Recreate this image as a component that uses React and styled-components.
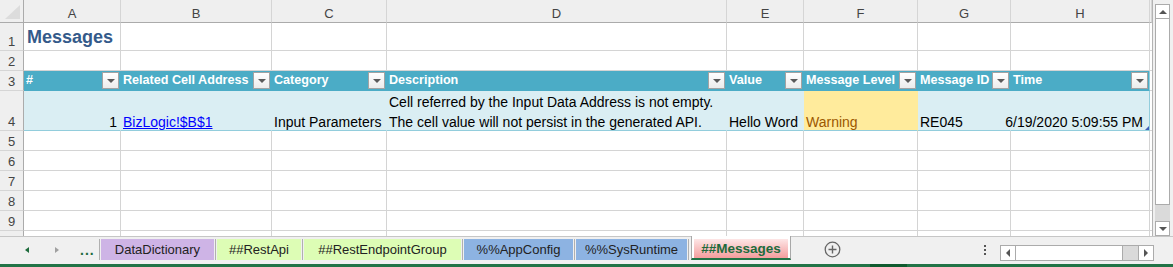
import React from 'react';
import styled, { createGlobalStyle } from 'styled-components';

const GlobalStyle = createGlobalStyle`
  html, body { margin: 0; padding: 0; background: #fff; }
  body { font-family: "Liberation Sans", Arial, sans-serif; }
  * { box-sizing: border-box; }
`;

const Window = styled.div`
  width: 1173px;
  height: 267px;
  display: flex;
  flex-direction: column;
  overflow: hidden;
  background: #f0f0f0;
`;

const SheetArea = styled.div`
  display: flex;
  height: 236px;
  flex: none;
`;

const Grid = styled.div`
  width: 1153px;
  height: 236px;
  overflow: hidden;
  display: grid;
  grid-template-columns: 24px 97px 151px 115px 340px 77px 114px 93px 139px 2px;
  grid-template-rows: 23px 28px 20px 20px 40px repeat(6, 20px);
  align-content: start;
  border-right: 1px solid #b3b3b3;
  background: #fff;
`;

const HeadBase = styled.div`
  display: flex;
  align-items: flex-end;
  justify-content: center;
  background: #efefef;
  color: #444;
  font-size: 13px;
  line-height: 17px;
`;

const Corner = styled(HeadBase)`
  justify-content: flex-end;
  padding: 0 3px 3px 0;
  border-right: 1px solid #ababab;
  border-bottom: 1px solid #ababab;
`;

const CornerTriangle = styled.span`
  width: 15px;
  height: 14px;
  background: #dcdcdc;
  clip-path: polygon(100% 0, 100% 100%, 0 100%);
`;

const ColHead = styled(HeadBase)`
  border-right: 1px solid #d5d5d5;
  border-bottom: 1px solid #ababab;
`;

const RowHead = styled(HeadBase)`
  border-right: 1px solid #ababab;
  border-bottom: 1px solid #d5d5d5;
`;

const Cell = styled.div`
  display: flex;
  align-items: flex-end;
  justify-content: ${(p) => (p.$align === 'right' ? 'flex-end' : 'flex-start')};
  padding: 0 ${(p) => p.$pr ?? 2}px 0 2px;
  background: #fff;
  border-right: 1px solid #d4d4d4;
  border-bottom: 1px solid #d4d4d4;
  font-size: 14px;
  line-height: 16px;
  color: #000;
  white-space: nowrap;
`;

const TitleCell = styled(Cell)`
  padding-left: 3px;
  font-size: 18px;
  font-weight: bold;
  line-height: 26px;
  color: #345a8a;
`;

const TableHeadCell = styled(Cell)`
  justify-content: space-between;
  padding: 0 1px 0 2px;
  background: #4bacc6;
  border-right-color: ${(p) => (p.$last ? '#92cddc' : '#4bacc6')};
  border-bottom-color: #4bacc6;
  color: #fff;
  font-size: 12.6px;
  font-weight: bold;
`;

const HeadLabel = styled.span`
  padding-bottom: 2px;
`;

const FilterBtn = styled.span`
  flex: none;
  width: 17px;
  height: 17px;
  margin-bottom: 1px;
  border: 1px solid #a3a3a3;
  background: linear-gradient(#ffffff, #ececec);
  display: flex;
  align-items: center;
  justify-content: center;
  &::after {
    content: '';
    margin-top: 1px;
    border-left: 4px solid transparent;
    border-right: 4px solid transparent;
    border-top: 4px solid #5a5a5a;
  }
`;

const TableCell = styled(Cell)`
  position: relative;
  background: ${(p) => p.$bg || '#daeef3'};
  border-right-color: ${(p) => (p.$last ? '#92cddc' : p.$bg || '#daeef3')};
  border-bottom-color: #92cddc;
  color: ${(p) => p.$color || '#000'};
`;

const Lines = styled.div`
  display: flex;
  flex-direction: column;
  gap: 4px;
`;

const Link = styled.span`
  color: #0000ff;
  text-decoration: underline;
`;

const ResizeHandle = styled.span`
  position: absolute;
  right: 0;
  bottom: 0;
  width: 4px;
  height: 4px;
  background: #3f5fb8;
  clip-path: polygon(100% 0, 100% 100%, 0 100%);
`;

const VScroll = styled.div`
  width: 20px;
  height: 236px;
  display: flex;
  flex-direction: column;
  padding: 4px 3px 0 2px;
  background: #f0f0f0;
`;

const ScrollBtn = styled.div`
  flex: none;
  width: 15px;
  height: 15px;
  border: 1px solid #ababab;
  background: #fff;
  display: flex;
  align-items: center;
  justify-content: center;
  &::after {
    content: '';
    ${(p) =>
      p.$dir === 'up'
        ? 'border-left:4px solid transparent;border-right:4px solid transparent;border-bottom:4px solid #555;'
        : p.$dir === 'down'
        ? 'border-left:4px solid transparent;border-right:4px solid transparent;border-top:4px solid #555;'
        : p.$dir === 'left'
        ? 'border-top:4px solid transparent;border-bottom:4px solid transparent;border-right:4px solid #555;'
        : 'border-top:4px solid transparent;border-bottom:4px solid transparent;border-left:4px solid #555;'}
  }
`;

const VThumb = styled.div`
  flex: none;
  height: 186px;
  border: 1px solid #ababab;
  border-top: none;
  background: #fff;
`;

const VTrack = styled.div`
  flex: 1;
  background: #dadada;
`;

const TabBar = styled.div`
  flex: none;
  height: 28px;
  border-top: 1px solid #c6c6c6;
  padding-top: 2px;
  display: flex;
  align-items: flex-start;
  background: #f0f0f0;
  font-size: 13px;
  color: #222;
`;

const Nav = styled.div`
  width: 99px;
  height: 21px;
  flex: none;
  display: flex;
  align-items: center;
  padding-left: 25px;
`;

const NavArrow = styled.span`
  width: 0;
  height: 0;
  margin-right: ${(p) => p.$mr}px;
  border-top: 3.5px solid transparent;
  border-bottom: 3.5px solid transparent;
  ${(p) =>
    p.$dir === 'left'
      ? `border-right: 4px solid ${p.$color};`
      : `border-left: 4px solid ${p.$color};`}
`;

const Ellipsis = styled.span`
  color: #1e6b3c;
  font-weight: bold;
  font-size: 14px;
  letter-spacing: 1px;
  line-height: 21px;
  padding-top: 2px;
`;

const TabSep = styled.span`
  flex: none;
  width: 1px;
  height: 21px;
  margin: 0 ${(p) => p.$mr ?? 1}px 0 ${(p) => p.$ml ?? 1}px;
  background: #b0b0b0;
`;

const Tab = styled.div`
  flex: none;
  width: ${(p) => p.$w}px;
  height: 21px;
  display: flex;
  align-items: center;
  justify-content: center;
  background: ${(p) => p.$bg};
  white-space: nowrap;
`;

const ActiveTab = styled.div`
  flex: none;
  width: 100px;
  height: 24px;
  margin-top: -3px;
  padding: 3px 2px 0;
  background: #fff;
  border-left: 1px solid #a8a8a8;
  border-right: 1px solid #a8a8a8;
  border-bottom: 2px solid #217346;
  display: flex;
`;

const ActiveLabel = styled.div`
  flex: 1;
  display: flex;
  align-items: center;
  justify-content: center;
  background: linear-gradient(to bottom, #fde6e6, #f49d9d);
  color: #1e6b3c;
  font-weight: bold;
  font-size: 13.5px;
`;

const TabRest = styled.div`
  flex: 1;
  height: 21px;
  display: flex;
  align-items: center;
`;

const AddSheet = styled.svg`
  flex: none;
  margin-left: 33px;
`;

const Dots = styled.span`
  flex: none;
  margin-left: 143px;
  width: 2px;
  height: 12px;
  background: radial-gradient(circle, #555 0.9px, transparent 1.1px) 0 0 / 2px 4px repeat-y;
`;

const HScroll = styled.div`
  flex: none;
  margin-left: 14px;
  margin-top: 6px;
  width: 154px;
  height: 16px;
  display: flex;
  border: 1px solid #ababab;
  background: #fff;
`;

const HBtn = styled(ScrollBtn)`
  height: 14px;
  border: none;
  ${(p) => (p.$dir === 'left' ? 'border-right:1px solid #ababab;' : 'border-left:1px solid #ababab;')}
`;

const HThumb = styled.div`
  flex: none;
  width: 107px;
  background: #fff;
  border-right: 1px solid #ababab;
`;

const HTrack = styled.div`
  flex: 1;
  background: #dadada;
`;

const Corner2 = styled.div`
  width: 20px;
  flex: none;
`;

const StatusStrip = styled.div`
  flex: none;
  height: 3px;
  background: #217346;
  display: flex;
  padding-left: 870px;
`;

const StatusMark = styled.span`
  width: 37px;
  background: #0f5a2e;
`;

const columns = ['A', 'B', 'C', 'D', 'E', 'F', 'G', 'H', ''];
const headers = ['#', 'Related Cell Address', 'Category', 'Description', 'Value', 'Message Level', 'Message ID', 'Time'];

export default function App() {
  const emptyRow = (r, label = r) => (
    <React.Fragment key={r}>
      <RowHead>{label}</RowHead>
      {columns.map((c, i) => (
        <Cell key={i} />
      ))}
    </React.Fragment>
  );

  return (
    <>
      <GlobalStyle />
      <Window>
        <SheetArea>
          <Grid>
            <Corner>
              <CornerTriangle />
            </Corner>
            {columns.map((c, i) => (
              <ColHead key={i}>{c}</ColHead>
            ))}

            <RowHead>1</RowHead>
            <TitleCell>Messages</TitleCell>
            {columns.slice(1).map((c, i) => (
              <Cell key={i} />
            ))}

            {emptyRow(2)}

            <RowHead>3</RowHead>
            {headers.map((h, i) => (
              <TableHeadCell key={i} $last={i === headers.length - 1}>
                <HeadLabel>{h}</HeadLabel>
                <FilterBtn />
              </TableHeadCell>
            ))}
            <Cell />

            <RowHead>4</RowHead>
            <TableCell $align="right" $pr={3}>1</TableCell>
            <TableCell>
              <Link>BizLogic!$B$1</Link>
            </TableCell>
            <TableCell>Input Parameters</TableCell>
            <TableCell>
              <Lines>
                <span>Cell referred by the Input Data Address is not empty.</span>
                <span>The cell value will not persist in the generated API.</span>
              </Lines>
            </TableCell>
            <TableCell>Hello Word</TableCell>
            <TableCell $bg="#ffeb9c" $color="#9c5700">Warning</TableCell>
            <TableCell>RE045</TableCell>
            <TableCell $align="right" $pr={6} $last>
              6/19/2020 5:09:55 PM
              <ResizeHandle />
            </TableCell>
            <Cell />

            {[5, 6, 7, 8, 9].map((r) => emptyRow(r))}
            {emptyRow(10, '')}
          </Grid>
          <VScroll>
            <ScrollBtn $dir="up" />
            <VThumb />
            <VTrack />
            <ScrollBtn $dir="down" />
          </VScroll>
        </SheetArea>

        <TabBar>
          <Nav>
            <NavArrow $dir="left" $color="#1e6b3c" $mr={26} />
            <NavArrow $dir="right" $color="#a0a0a0" $mr={21} />
            <Ellipsis>...</Ellipsis>
          </Nav>
          <TabSep $ml={0} />
          <Tab $w={113} $bg="#ceb4e6">DataDictionary</Tab>
          <TabSep />
          <Tab $w={84} $bg="#ddfdb5">##RestApi</Tab>
          <TabSep />
          <Tab $w={157} $bg="#ddfdb5">##RestEndpointGroup</Tab>
          <TabSep />
          <Tab $w={109} $bg="#8db3e2">%%AppConfig</Tab>
          <TabSep />
          <Tab $w={111} $bg="#8db3e2">%%SysRuntime</Tab>
          <TabSep $mr={2} />
          <ActiveTab>
            <ActiveLabel>##Messages</ActiveLabel>
          </ActiveTab>
          <TabRest>
            <AddSheet width="17" height="17" viewBox="0 0 17 17">
              <circle cx="8.5" cy="8.5" r="7.3" fill="none" stroke="#666" strokeWidth="1.3" />
              <path d="M8.5 4.5v8M4.5 8.5h8" stroke="#666" strokeWidth="1.4" />
            </AddSheet>
            <Dots />
            <HScroll>
              <HBtn $dir="left" />
              <HThumb />
              <HTrack />
              <HBtn $dir="right" />
            </HScroll>
            <Corner2 />
          </TabRest>
        </TabBar>
        <StatusStrip>
          <StatusMark />
        </StatusStrip>
      </Window>
    </>
  );
}
